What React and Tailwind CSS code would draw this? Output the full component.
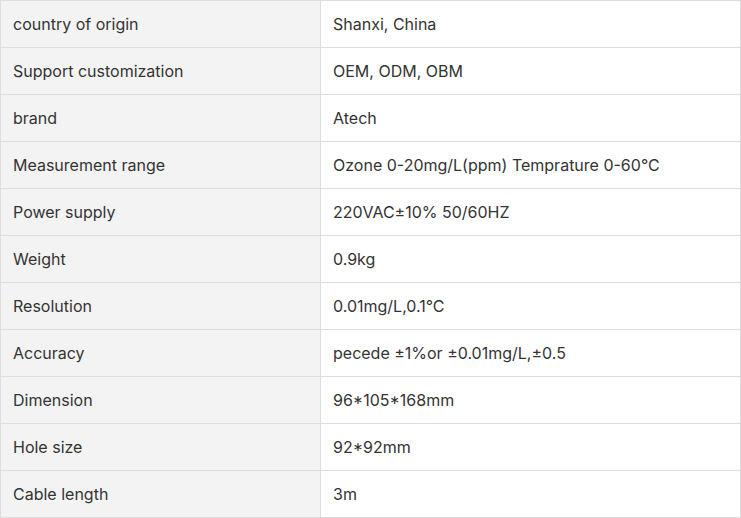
const rows = [
  ['country of origin', 'Shanxi, China'],
  ['Support customization', 'OEM, ODM, OBM'],
  ['brand', 'Atech'],
  ['Measurement range', 'Ozone 0-20mg/L(ppm) Temprature 0-60°C'],
  ['Power supply', '220VAC±10% 50/60HZ'],
  ['Weight', '0.9kg'],
  ['Resolution', '0.01mg/L,0.1°C'],
  ['Accuracy', 'pecede ±1%or ±0.01mg/L,±0.5'],
  ['Dimension', '96*105*168mm'],
  ['Hole size', '92*92mm'],
  ['Cable length', '3m'],
];

export default function App() {
  return (
    <div className="w-[741px] bg-white font-['Inter',sans-serif] text-[16px] text-[#333]">
      <div className="border-t border-l border-[#dddddd]">
        {rows.map(([k, v], idx) => (
          <div key={idx} className="flex h-[47px]">
            <div className="w-[320px] flex items-center pl-3 bg-[#f3f3f3] border-r border-b border-[#dddddd]">
              {k}
            </div>
            <div className="w-[420px] flex items-center pl-3 bg-white border-r border-b border-[#dddddd]">
              {v}
            </div>
          </div>
        ))}
      </div>
    </div>
  );
}
